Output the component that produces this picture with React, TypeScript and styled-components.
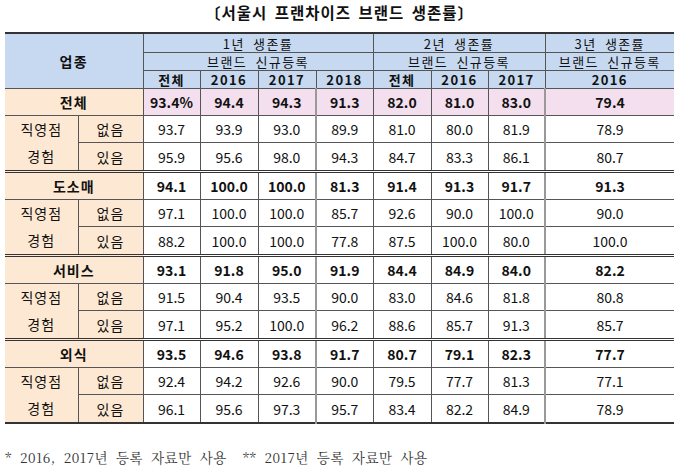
import React from 'react';
import styled, { createGlobalStyle, css } from 'styled-components';

const Global = createGlobalStyle`
  html, body { margin: 0; padding: 0; background: #ffffff; }
  body { font-family: "Noto Sans CJK KR", "Noto Sans", sans-serif; color: #111; }
`;

const Page = styled.div`
  width: 680px;
  height: 468px;
  padding: 0 6px 0 5px;
  box-sizing: border-box;
`;

const Title = styled.h1`
  margin: 0;
  height: 24px;
  display: flex;
  align-items: center;
  justify-content: center;
  font-size: 15.5px;
  font-weight: 700;
  letter-spacing: 1px;
  word-spacing: 3px;
`;

const Table = styled.table`
  margin-top: 8px;
  width: 669px;
  border-collapse: collapse;
  table-layout: fixed;
  border-top: 2px solid #333;
  border-bottom: 2px solid #333;
  font-size: 14px;
`;

const Head = styled.th<{ $bold?: boolean; $h?: number }>`
  background: #c6d9f0;
  border: 1px solid #555;
  border-left-color: #666;
  height: ${(p) => p.$h ?? 17}px;
  padding: 0;
  font-size: ${(p) => (p.$h && p.$h > 30 ? 14 : 13)}px;
  font-weight: ${(p) => (p.$bold ? 700 : 400)};
  letter-spacing: 1.4px;
  word-spacing: 4px;
  line-height: ${(p) => (p.$h && p.$h > 30 ? 20 : 17)}px;
  text-align: center;
  white-space: nowrap;
  overflow: hidden;
  &:first-child { border-left: none; }
  &:last-child { border-right: none; }
`;

const Row = styled.tr<{ $group?: boolean }>`
  ${(p) =>
    p.$group &&
    css`
      & > td { border-top: 3px double #333; }
    `}
`;

const Label = styled.td<{ $bold?: boolean; $lines?: boolean }>`
  background: #fde9d3;
  border: 1px solid #555;
  height: 26px;
  padding: 0;
  text-align: center;
  font-weight: ${(p) => (p.$bold ? 700 : 400)};
  letter-spacing: 1px;
  line-height: ${(p) => (p.$lines ? '27px' : '18px')};
  &:first-child { border-left: none; }
`;

const Data = styled.td<{ $bold?: boolean; $pink?: boolean; $sep?: boolean }>`
  background: ${(p) => (p.$pink ? '#f3dfee' : '#ffffff')};
  border: 1px solid #555;
  ${(p) => p.$sep && css`border-left: 2px solid #999;`}
  height: 26px;
  padding: 0;
  text-align: center;
  font-weight: ${(p) => (p.$bold ? 700 : 400)};
  &:last-child { border-right: none; }
`;

const Note = styled.p`
  margin: 23px 0 0 0;
  font-family: "Noto Serif CJK KR", "Liberation Serif", serif;
  font-size: 13.5px;
  color: #333;
  letter-spacing: 0.5px;
  word-spacing: 4px;
  white-space: pre;
`;

const widths = [73, 65, 57, 58, 58, 57, 58, 57, 57, 129];

type Group = {
  name: string;
  total: string[];
  none: string[];
  some: string[];
};

const groups: Group[] = [
  {
    name: '전체',
    total: ['93.4%', '94.4', '94.3', '91.3', '82.0', '81.0', '83.0', '79.4'],
    none: ['93.7', '93.9', '93.0', '89.9', '81.0', '80.0', '81.9', '78.9'],
    some: ['95.9', '95.6', '98.0', '94.3', '84.7', '83.3', '86.1', '80.7'],
  },
  {
    name: '도소매',
    total: ['94.1', '100.0', '100.0', '81.3', '91.4', '91.3', '91.7', '91.3'],
    none: ['97.1', '100.0', '100.0', '85.7', '92.6', '90.0', '100.0', '90.0'],
    some: ['88.2', '100.0', '100.0', '77.8', '87.5', '100.0', '80.0', '100.0'],
  },
  {
    name: '서비스',
    total: ['93.1', '91.8', '95.0', '91.9', '84.4', '84.9', '84.0', '82.2'],
    none: ['91.5', '90.4', '93.5', '90.0', '83.0', '84.6', '81.8', '80.8'],
    some: ['97.1', '95.2', '100.0', '96.2', '88.6', '85.7', '91.3', '85.7'],
  },
  {
    name: '외식',
    total: ['93.5', '94.6', '93.8', '91.7', '80.7', '79.1', '82.3', '77.7'],
    none: ['92.4', '94.2', '92.6', '90.0', '79.5', '77.7', '81.3', '77.1'],
    some: ['96.1', '95.6', '97.3', '95.7', '83.4', '82.2', '84.9', '78.9'],
  },
];

const sepCols = new Set([3, 7]);

function Cells({ values, bold, pink }: { values: string[]; bold?: boolean; pink?: boolean }) {
  return (
    <>
      {values.map((v, i) => (
        <Data key={i} $bold={bold} $pink={pink} $sep={sepCols.has(i)}>
          {v}
        </Data>
      ))}
    </>
  );
}

export default function App() {
  return (
    <Page>
      <Global />
      <Title>〔서울시 프랜차이즈 브랜드 생존률〕</Title>
      <Table>
        <colgroup>
          {widths.map((w, i) => (
            <col key={i} style={{ width: w }} />
          ))}
        </colgroup>
        <thead>
          <tr>
            <Head colSpan={2} rowSpan={3} $bold $h={53}>
              업종
            </Head>
            <Head colSpan={4} $h={18}>1년 생존률</Head>
            <Head colSpan={3} $h={18}>2년 생존률</Head>
            <Head $h={18}>3년 생존률</Head>
          </tr>
          <tr>
            <Head colSpan={4}>브랜드 신규등록</Head>
            <Head colSpan={3}>브랜드 신규등록</Head>
            <Head>브랜드 신규등록</Head>
          </tr>
          <tr>
            <Head $bold>전체</Head>
            <Head $bold>2016</Head>
            <Head $bold>2017</Head>
            <Head $bold>2018</Head>
            <Head $bold>전체</Head>
            <Head $bold>2016</Head>
            <Head $bold>2017</Head>
            <Head $bold>2016</Head>
          </tr>
        </thead>
        <tbody>
          {groups.map((g, gi) => (
            <React.Fragment key={g.name}>
              <Row $group={gi > 0}>
                <Label colSpan={2} $bold>
                  {g.name}
                </Label>
                <Cells values={g.total} bold pink={gi === 0} />
              </Row>
              <Row>
                <Label rowSpan={2} $lines>
                  직영점
                  <br />
                  경험
                </Label>
                <Label>없음</Label>
                <Cells values={g.none} />
              </Row>
              <Row>
                <Label>있음</Label>
                <Cells values={g.some} />
              </Row>
            </React.Fragment>
          ))}
        </tbody>
      </Table>
      <Note>{'* 2016, 2017년 등록 자료만 사용  ** 2017년 등록 자료만 사용'}</Note>
    </Page>
  );
}
